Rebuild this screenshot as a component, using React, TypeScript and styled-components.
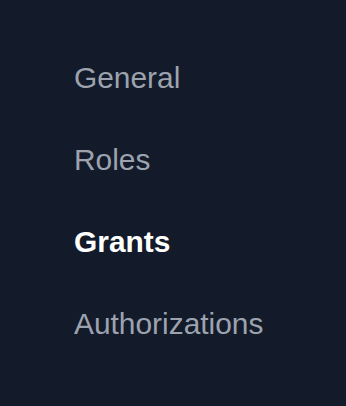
import React from "react";
import styled, { createGlobalStyle } from "styled-components";

const GlobalStyle = createGlobalStyle`
  html, body {
    margin: 0;
    padding: 0;
    background: #131a29;
  }
`;

const Page = styled.div`
  min-height: 406px;
  background: #131a29;
  box-sizing: border-box;
  padding: 60px 0 0 74px;
`;

const Menu = styled.ul`
  list-style: none;
  margin: 0;
  padding: 0;
  display: flex;
  flex-direction: column;
  gap: 46px;
`;

const Item = styled.li<{ $active?: boolean }>`
  font-family: "Liberation Sans", Arial, sans-serif;
  font-size: 29.9px;
  line-height: 36px;
  font-weight: ${({ $active }) => ($active ? 700 : 400)};
  color: ${({ $active }) => ($active ? "#ffffff" : "#9ca3af")};
  cursor: pointer;
`;

const sections = ["General", "Roles", "Grants", "Authorizations"];

function App() {
  const active = "Grants";
  return (
    <>
      <GlobalStyle />
      <Page>
        <Menu>
          {sections.map((name) => (
            <Item key={name} $active={name === active}>
              {name}
            </Item>
          ))}
        </Menu>
      </Page>
    </>
  );
}

export default App;
